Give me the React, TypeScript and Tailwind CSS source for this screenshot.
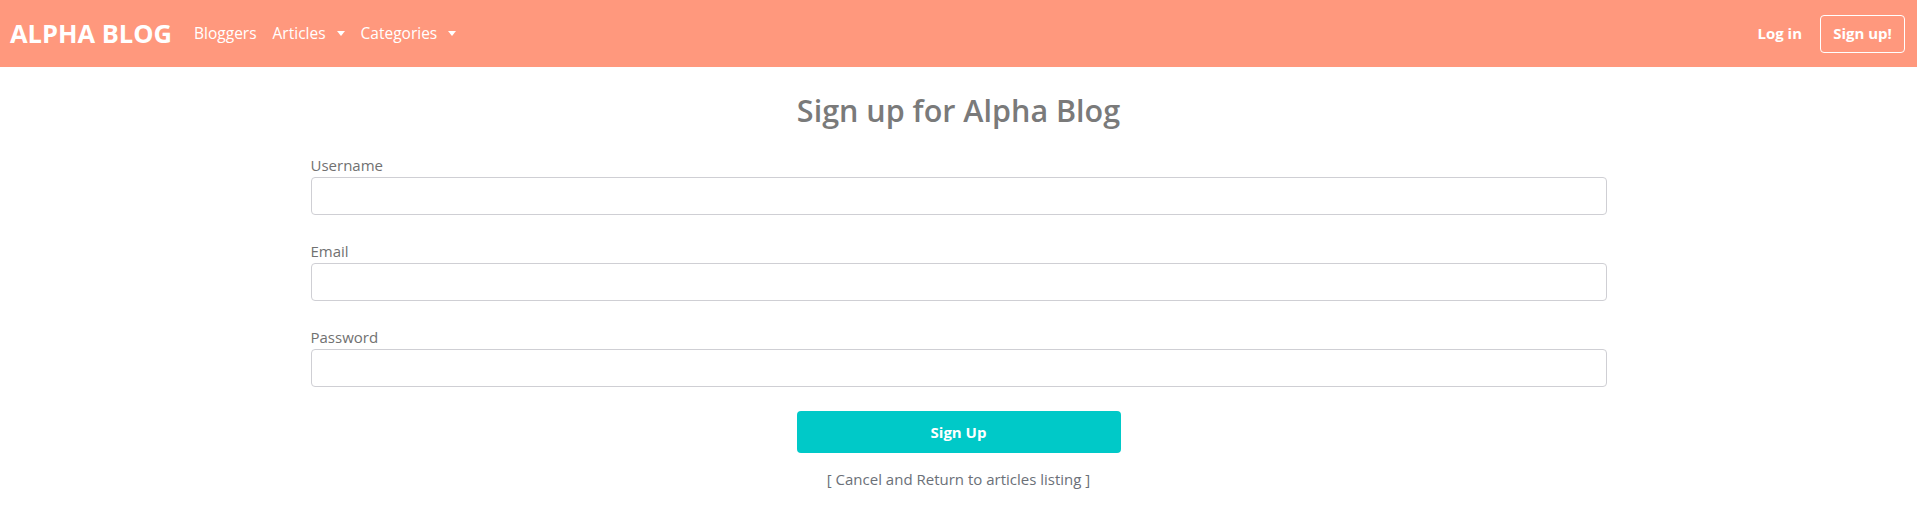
import { useState } from "react";

const fieldNames = ["Username", "Email", "Password"];

const Caret = () => (
  <span className="ml-[11px] inline-block h-0 w-0 border-x-[4px] border-t-[5px] border-x-transparent border-t-white align-middle" />
);

const App = () => {
  const [values, setValues] = useState<Record<string, string>>({});

  return (
    <div className="min-h-screen bg-white font-['Open_Sans',sans-serif]">
      <nav className="flex h-[67px] items-center justify-between bg-[#ff987d] pl-[10px] pr-[12px]">
        <div className="flex items-center">
          <a href="#" className="mr-[22px] text-[25.5px] font-bold text-white">
            ALPHA BLOG
          </a>
          <ul className="flex items-center gap-[16px] text-[15.5px] text-white">
            <li>Bloggers</li>
            <li className="flex items-center">
              Articles
              <Caret />
            </li>
            <li className="flex items-center">
              Categories
              <Caret />
            </li>
          </ul>
        </div>
        <div className="flex items-center gap-[18px] text-[15px] font-bold text-white">
          <a href="#">Log in</a>
          <a
            href="#"
            className="flex h-[38px] w-[85px] items-center justify-center rounded-[4px] border border-white"
          >
            Sign up!
          </a>
        </div>
      </nav>

      <main className="flex flex-col items-center pt-[21px]">
        <h2 className="text-[30.5px] font-semibold text-[#7a7a7a]">Sign up for Alpha Blog</h2>
        <form className="mt-[19px] flex w-[1296px] flex-col gap-[10px]">
          {fieldNames.map((name) => (
            <div key={name} className="flex flex-col">
              <label className="text-[15px] leading-[24px] text-[#717171]">{name}</label>
              <input
                type={name === "Password" ? "password" : name === "Email" ? "email" : "text"}
                value={values[name] ?? ""}
                onChange={(e) => setValues({ ...values, [name]: e.target.value })}
                className="mb-[14px] h-[38px] rounded-[4px] border border-[#cfcfd4] px-3 outline-none"
              />
            </div>
          ))}
          <div className="flex flex-col items-center">
            <button
              type="button"
              className="h-[42px] w-[324px] rounded-[4px] bg-[#00c9c8] text-[15px] font-bold text-white"
            >
              Sign Up
            </button>
            <a href="#" className="mt-[15px] text-[15px] text-[#6b7078]">
              [ Cancel and Return to articles listing ]
            </a>
          </div>
        </form>
      </main>
    </div>
  );
};

export default App;
